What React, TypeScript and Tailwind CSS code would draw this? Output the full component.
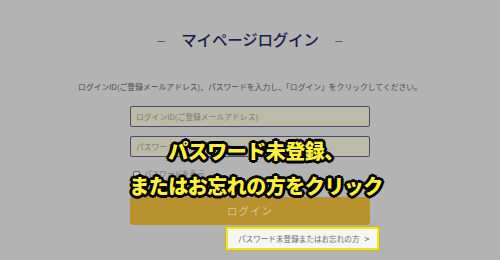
import React from "react";

const jp = { fontFamily: '"Noto Sans CJK JP", "Noto Sans", sans-serif' };

export default function App() {
  const stroke =
    "[text-shadow:2px_0_0_#000,-2px_0_0_#000,0_2px_0_#000,0_-2px_0_#000,2px_2px_0_#000,-2px_-2px_0_#000,2px_-2px_0_#000,-2px_2px_0_#000,1px_2px_0_#000,2px_1px_0_#000,-1px_2px_0_#000,-2px_1px_0_#000,1px_-2px_0_#000,2px_-1px_0_#000,-1px_-2px_0_#000,-2px_-1px_0_#000,0_3px_0_#000,3px_0_0_#000,-3px_0_0_#000,0_-3px_0_#000]";
  return (
    <div className="relative w-[500px] h-[260px] bg-[#b3b3b3] overflow-hidden" style={jp}>
      <div className="flex flex-col items-center pt-[29px]">
        <div className="flex items-center gap-[15px] text-[#1d1d4a] h-[22px]">
          <span className="text-[10px] text-[#3a3a55]">－</span>
          <span className="text-[15.5px] font-medium tracking-[-0.2px]">マイページログイン</span>
          <span className="text-[10px] text-[#3a3a55]">－</span>
        </div>
        <p className="mt-[31px] text-[7.8px] text-[#4a4a4a] leading-[10px]">
          ログインID(ご登録メールアドレス)、パスワードを入力し、「ログイン」をクリックしてください。
        </p>
        <div className="mt-[14px] w-[240px] flex flex-col">
          <div className="h-[21px] rounded-[2px] border border-[#4a4a68] bg-[#bcbaa8] flex items-center px-[5px] text-[7.8px] text-[#7c7a70]">
            ログインID(ご登録メールアドレス)
          </div>
          <div className="mt-[9px] h-[21px] rounded-[2px] border border-[#4a4a68] bg-[#bcbaa8] flex items-center px-[5px] text-[7.8px] text-[#7c7a70]">
            パスワード
          </div>
          <div className="mt-[12px] h-[10px] flex items-center gap-[4px] pl-[3px]">
            <span className="w-[7px] h-[7px] border border-[#666] rounded-[1px] bg-[#c4c4c4]" />
            <span className="text-[7.6px] text-[#777]">パスワードを表示</span>
          </div>
          <div className="mt-[18px] h-[28px] rounded-[3px] bg-[#b8922f] flex items-center justify-center text-[10.5px] text-[#dcc78f] tracking-[1px]">
            ログイン
          </div>
          <div className="flex justify-end mt-[2px] -mr-[9px]">
            <div className="w-[153px] h-[23px] border-[2px] border-[#efe13a] bg-[#f6f6f2] shadow-[0_0_0_1px_#c9b92f] flex items-center pl-[10px] gap-[5px] text-[7.6px] text-[#6a6a6a]">
              <span>パスワード未登録またはお忘れの方</span>
              <span className="text-[9px] text-[#555]">&gt;</span>
            </div>
          </div>
        </div>
      </div>
      <div className="absolute left-0 right-0 top-[137px] flex flex-col items-center pl-[12px]">
        <div className={`text-[20px] font-black text-[#fff23a] leading-[27px] tracking-[-0.5px] ${stroke}`}>
          パスワード未登録、
        </div>
        <div className={`mt-[8px] text-[20px] font-black text-[#fff23a] leading-[27px] tracking-[-0.5px] ${stroke}`}>
          またはお忘れの方をクリック
        </div>
      </div>
    </div>
  );
}
